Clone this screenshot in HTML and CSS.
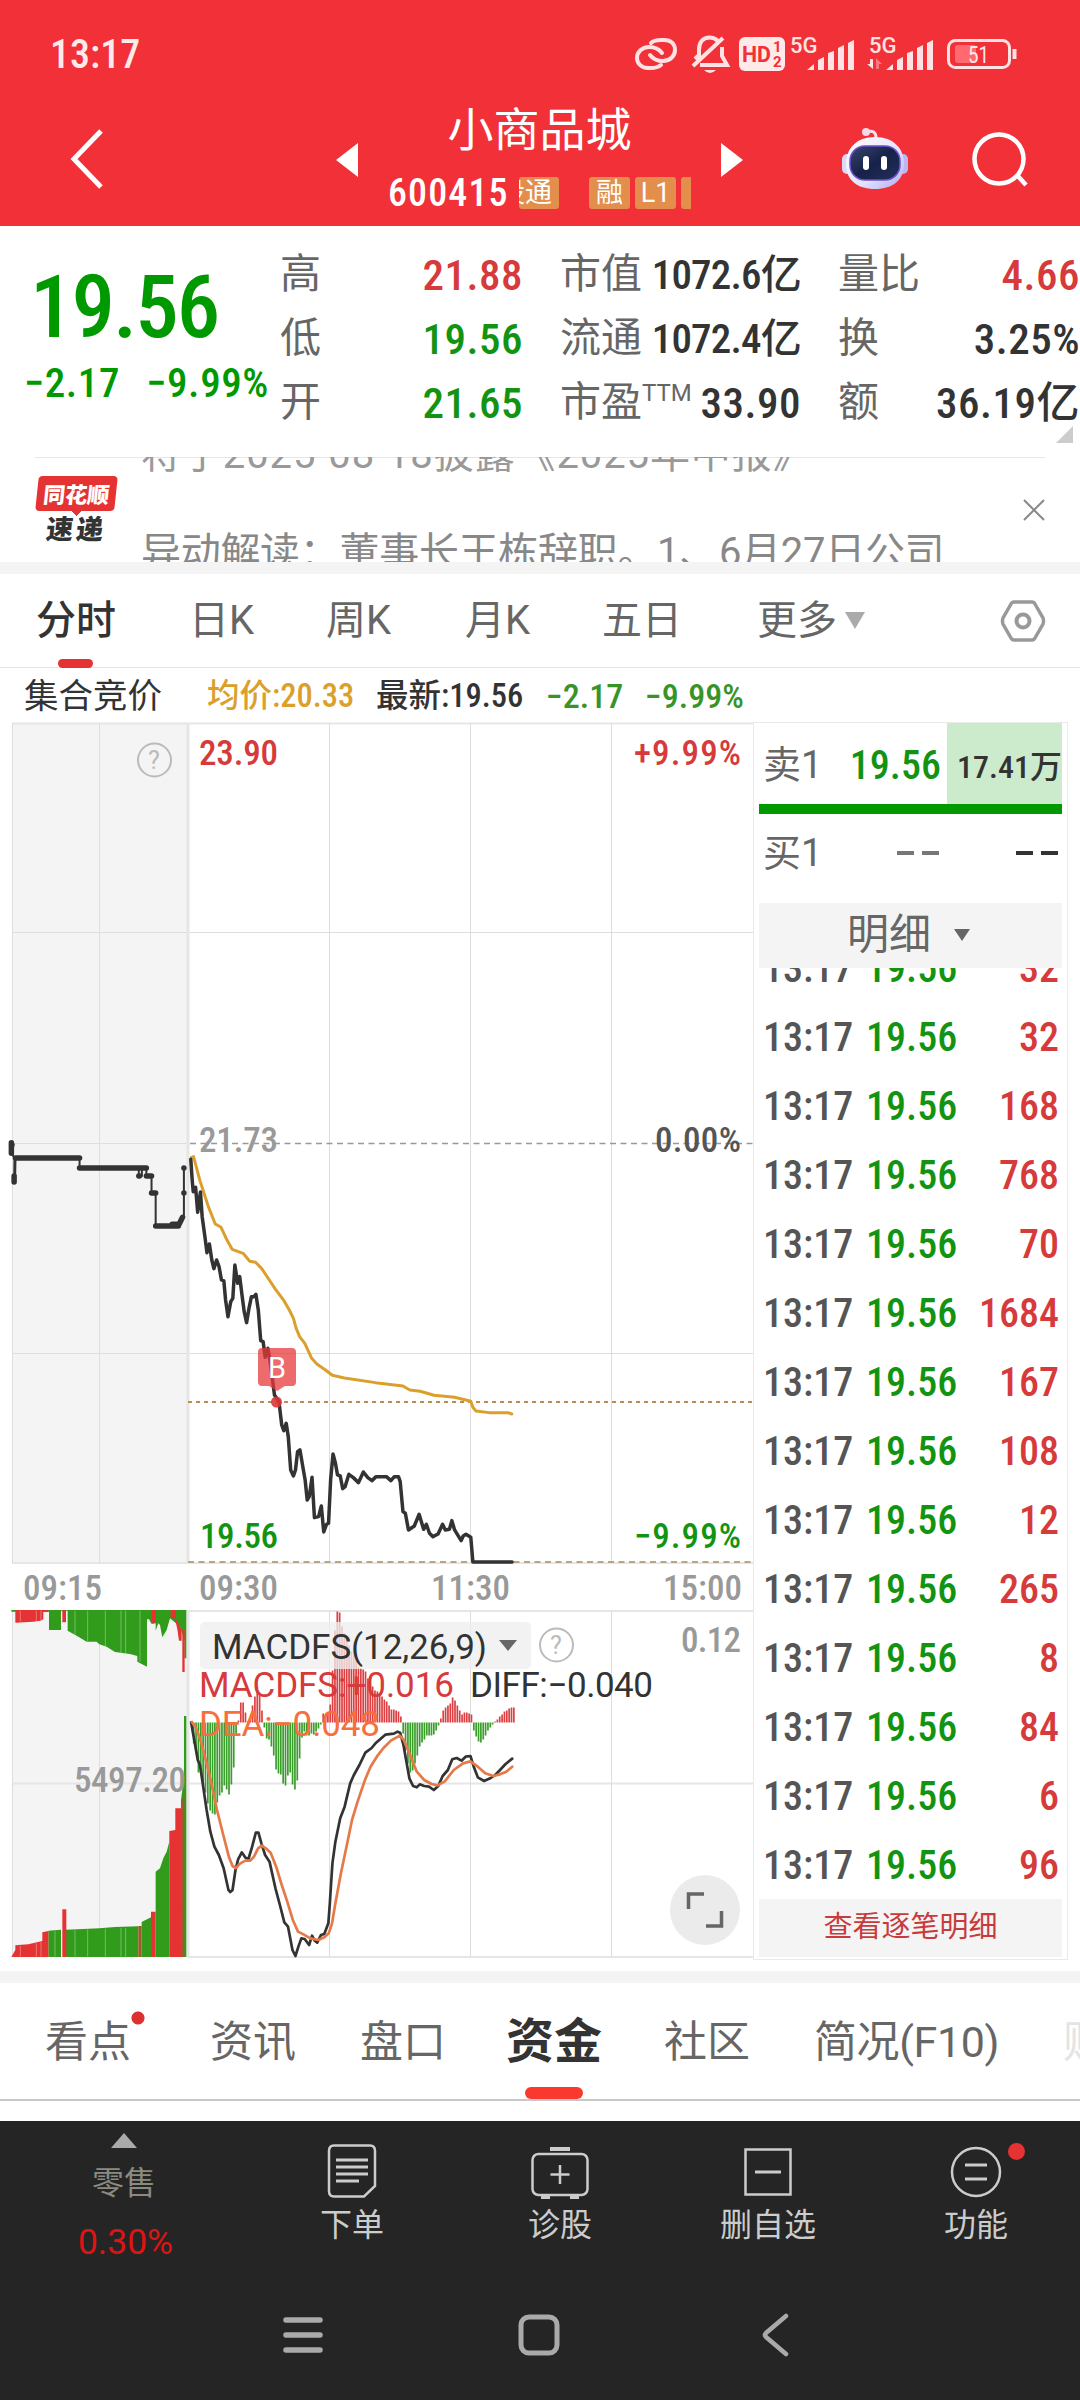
FILE: index.html
```html
<!DOCTYPE html>
<html lang="zh-CN">
<head>
    <meta charset="UTF-8">
    <meta name="viewport" content="width=device-width, initial-scale=1.0">
    <title>小商品城 600415</title>
    <link rel="stylesheet" href="styles.css">
</head>
<body>

    <header class="header">
        <div class="status-bar">
            <span class="clock num">13:17</span>
            <svg class="status-icons" width="400" height="50" viewBox="0 0 400 50" fill="none" stroke="#ffe3e4">
                <g stroke-width="4" stroke-linecap="round">
                    <path d="M21 13C24 10 27 10 31 10H34C41 10 45 14 45 20C45 26 40 31 33 31C27 31 23 29 20 25"/>
                    <path d="M31 35C28 37.500 25 38 21 38H18C11 38 7 33 7 28C7 22 12 17 19 17C25 17 29 19 32 23"/>
                </g>
                <path d="M63 36L93 8M65 29L69 25V20C69 12 73 7.500 79.500 7.500C83 7.500 86 9 88 11M92 17V26L97 35H70" stroke-width="4"/>
                <path d="M74 40H86Q80 46 74 40" fill="#ffe3e4" stroke="none"/>
                <rect x="109" y="7" width="46" height="34" rx="6" fill="#ffe9e9" stroke="none"/>
                <g fill="#f13037" stroke="none" font-weight="700">
                    <text x="112" y="32" font-size="22" textLength="29" lengthAdjust="spacingAndGlyphs">HD</text>
                    <text x="143" y="22" font-size="15">1</text>
                    <text x="143" y="37" font-size="15">2</text>
                </g>
                <g fill="#ffe3e4" stroke="none">
                    <text x="160" y="23" font-size="22" font-weight="500">5G</text>
                    <path d="M177 40L184 34V40zM188 30L194 27V40H188zM198 23L204 21V40H198zM208 18L214 15V40H208zM218 13L224 10V40H218z"/>
                    <text x="239" y="23" font-size="22" font-weight="500">5G</text>
                    <path d="M256 40L263 34V40zM267 30L273 27V40H267zM277 23L283 21V40H277zM287 18L293 15V40H287zM297 13L303 10V40H297z"/>
                    <path d="M237 34H240V29H243V39z"/>
                    <path d="M246 39V28L252 34H249V39z" opacity=".4"/>
                </g>
                <rect x="318.500" y="10.500" width="61" height="27" rx="7" stroke-width="3"/>
                <rect x="325" y="15" width="21" height="18" rx="3" fill="#ff6a70" stroke="none"/>
                <path d="M384.500 19V29" stroke-width="4"/>
                <text x="338" y="33" font-size="24" fill="#ffe9e9" stroke="none" textLength="21" lengthAdjust="spacingAndGlyphs">51</text>
            </svg>
        </div>
        <div class="nav-bar">
            <svg class="back" width="40" height="66" viewBox="0 0 40 66"><path d="M34 5L7 33L34 61" fill="none" stroke="#fff" stroke-width="5"/></svg>
            <svg class="prev" width="22" height="34" viewBox="0 0 22 34"><path d="M22 0V34L0 17z" fill="#fff"/></svg>
            <div class="stock">
                <h1>小商品城</h1>
                <div class="stock-meta">
                    <span class="code num">600415</span>
                    <div class="tags">
                        <span class="tag tag-cut">股通</span>
                        <span class="tag">融</span>
                        <span class="tag">L1</span>
                        <span class="tag tag-end"></span>
                    </div>
                </div>
            </div>
            <svg class="next" width="22" height="34" viewBox="0 0 22 34"><path d="M0 0V34L22 17z" fill="#fff"/></svg>
            <svg class="robot" width="68" height="64" viewBox="0 0 68 64">
                <defs>
                    <linearGradient id="head" x1="0" y1="0" x2="1" y2="1">
                        <stop offset="0" stop-color="#fff"/>
                        <stop offset=".6" stop-color="#e4e2fb"/>
                        <stop offset="1" stop-color="#a9acf0"/>
                    </linearGradient>
                    <linearGradient id="face" x1="0" y1="0" x2="1" y2="1">
                        <stop offset="0" stop-color="#38456c"/>
                        <stop offset=".5" stop-color="#17224a"/>
                        <stop offset="1" stop-color="#222f58"/>
                    </linearGradient>
                </defs>
                <path d="M25 6C32 4 35 6 35 12" fill="none" stroke="#f3dfee" stroke-width="3"/>
                <circle cx="25" cy="6" r="4" fill="#f6d9e4"/>
                <rect x="1" y="28" width="10" height="20" rx="5" fill="#ddd9f5"/>
                <rect x="57" y="28" width="10" height="20" rx="5" fill="#b9b8f2"/>
                <path d="M34 11C53 11 63 23 63 38C63 54 52 63 34 63C16 63 5 54 5 38C5 23 15 11 34 11z" fill="url(#head)"/>
                <rect x="9" y="20" width="50" height="34" rx="15" fill="url(#face)" stroke="#6d4fd0" stroke-width="1.500"/>
                <rect x="22" y="30" width="6" height="14" rx="3" fill="#fff"/>
                <rect x="40" y="30" width="6" height="14" rx="3" fill="#fff"/>
            </svg>
            <svg class="search" width="60" height="60" viewBox="0 0 60 60" fill="none" stroke="#fff" stroke-width="4.500"><circle cx="28" cy="28" r="24.500"/><path d="M45 43L55 54"/></svg>
        </div>
    </header>

    <section class="quote">
        <div class="price-block">
            <div class="price num">19.56</div>
            <div class="change num"><span>−2.17</span><span>−9.99%</span></div>
        </div>
        <dl class="stats">
            <div><dt>高</dt><dd class="num red">21.88</dd></div>
            <div><dt>市值</dt><dd class="num tight">1072.6亿</dd></div>
            <div><dt>量比</dt><dd class="num red">4.66</dd></div>
            <div><dt>低</dt><dd class="num green">19.56</dd></div>
            <div><dt>流通</dt><dd class="num tight">1072.4亿</dd></div>
            <div><dt>换</dt><dd class="num">3.25%</dd></div>
            <div><dt>开</dt><dd class="num green">21.65</dd></div>
            <div><dt>市盈<sup>TTM</sup></dt><dd class="num">33.90</dd></div>
            <div><dt>额</dt><dd class="num">36.19亿</dd></div>
        </dl>
        <i class="corner"></i>
    </section>

    <section class="news">
        <div class="news-logo">
            <span class="logo-top">同花顺</span>
            <span class="logo-bottom">速递</span>
        </div>
        <div class="news-lines">
            <p>将于2025-08-18披露《2025年中报》</p>
            <p>异动解读：董事长王栋辞职。1、6月27日公司</p>
        </div>
        <svg class="news-close" width="22" height="22" viewBox="0 0 22 22"><path d="M1 1L21 21M21 1L1 21" stroke="#888" stroke-width="2"/></svg>
    </section>

    <nav class="period-tabs">
        <span class="active">分时</span>
        <span>日K</span>
        <span>周K</span>
        <span>月K</span>
        <span>五日</span>
        <span class="more">更多</span>
        <svg width="20" height="17" viewBox="0 0 20 17"><path d="M0 0H20L10 17z" fill="#aaa"/></svg>
        <svg class="settings" width="46" height="44" viewBox="0 0 46 44" fill="none" stroke="#999"><path d="M14 3H32Q34 3 35 5L43 19Q44 22 43 25L35 39Q34 41 32 41H14Q12 41 11 39L3 25Q2 22 3 19L11 5Q12 3 14 3z" stroke-width="3.500"/><circle cx="23" cy="22" r="6.500" stroke-width="4"/></svg>
    </nav>

    <main class="board">
        <div class="chart-side">
            <div class="info-row">
                <span class="auction">集合竞价</span>
                <span class="avg num">均价:20.33</span>
                <span class="last num">最新:19.56</span>
                <span class="diff num">−2.17</span>
                <span class="pct num">−9.99%</span>
            </div>

            <svg class="price-chart" width="753" height="842" viewBox="0 722 753 842">
                <rect x="12" y="723" width="176" height="840" fill="#f4f4f4"/>
                <path d="M12 723.500H753M12 1563H753" stroke="#e6e6e6" stroke-width="2"/>
                <path d="M12.500 723V1563M99.500 723V1563M329.500 723V1563M470.500 723V1563M611.500 723V1563M12 932.500H753M12 1143.500H188M12 1353.500H753" stroke="#dedede"/>
                <path d="M188 723V1563" stroke="#e6e6e6" stroke-width="3"/>
                <path d="M190 1143.500H753" stroke="#999" stroke-width="1.500" stroke-dasharray="6 4.500"/>
                <path d="M188 1402H753" stroke="#bd8b50" stroke-width="2" stroke-dasharray="4 4"/>
                <path d="M188 1562H753" stroke="#b9a583" stroke-width="2" stroke-dasharray="6 4.500"/>

                <g transform="translate(0 1100) scale(.3444 .3333)" fill="none" stroke-linejoin="round" stroke-linecap="round">
                    <path class="auction-line" d="M33 128L40 133L34 160L42 175L41 246L44 228L45 174H231V204H403V228H412V204H425V228H440V279H452V378H520L530 350H534V204"/>
                    <path class="auction-dots" d="M33 128V160M41 246V228M45 174H231M231 204H425M403 228H405M425 228H440M440 279H452M452 378H518M500 373H520L530 352M534 279V279.100M534 204V204.100"/>
                    <path class="avg-line" d="M556 172L562 170L580 240L605 320L625 372L642 382L658 418L674 448L690 454L706 460L725 484L742 487L760 506L780 537L800 568L825 603L840 630L852 655L860 685L870 710L885 730L905 775L920 792L945 810L965 826L1000 834L1090 848L1170 858L1190 870L1220 874L1260 886L1320 892L1367 904L1373 922L1382 933L1420 938H1475L1486 942"/>
                    <path class="price-line" d="M554 178L558 240L561 275L568 262L574 337L582 276L587 350L595 410L601 458L608 432L615 480L621 506L629 480L636 500L643 540L650 543L655 600L662 650L670 605L676 595L682 495L690 550L696 530L702 580L709 635L716 668L723 625L730 590H737L743 583L750 630L757 722L764 725L770 772L778 745L785 790L797 885L810 905L818 975L824 992L831 970L837 1010L844 1110L852 1128L858 1110L864 1055L871 1050L880 1105L886 1140L892 1200L898 1190L906 1132L913 1253L925 1250L933 1218L940 1296L948 1273L954 1270L960 1140L967 1062L974 1090L980 1125L988 1128L995 1166L1002 1160L1013 1123L1026 1133L1041 1148L1055 1116L1068 1133L1080 1142L1092 1130H1122L1135 1142L1145 1130H1157L1162 1145L1170 1235L1177 1240L1186 1290L1203 1278L1217 1243L1230 1288L1238 1273L1247 1300L1257 1310L1272 1302L1285 1273L1293 1290L1305 1288L1312 1262L1320 1290L1339 1322L1345 1308L1353 1303L1367 1312L1373 1386H1487"/>
                </g>
                <path d="M258 1352Q258 1348 262 1348H292Q296 1348 296 1352V1382Q296 1386 292 1386H285L277 1391L269 1386H262Q258 1386 258 1382z" fill="#e83a3c" fill-opacity=".75"/>
                <circle cx="276.500" cy="1402" r="5.500" fill="#dd3535" fill-opacity=".9"/>
                <text x="268" y="1378" font-size="29" fill="#fff">B</text>

                <circle cx="154.500" cy="760" r="16.500" fill="none" stroke="#bbb" stroke-width="2"/>
                <text x="148" y="769" font-size="25" fill="#bbb">?</text>
                <g class="chart-text">
                    <text x="199" y="765" fill="#d63a3a" textLength="79">23.90</text>
                    <text x="634" y="765" fill="#d63a3a" textLength="107">+9.99%</text>
                    <text x="199" y="1152" fill="#999" textLength="79">21.73</text>
                    <text x="655" y="1152" fill="#555" textLength="86">0.00%</text>
                    <text x="200" y="1548" fill="#129412" textLength="78">19.56</text>
                    <text x="634" y="1548" fill="#129412" textLength="107">−9.99%</text>
                </g>
            </svg>

            <div class="time-axis num">
                <span>09:15</span>
                <span>09:30</span>
                <span>11:30</span>
                <span>15:00</span>
            </div>

            <svg class="macd-chart" width="753" height="348" viewBox="0 1610 753 348">
                <rect x="12" y="1611" width="176" height="346" fill="#f4f4f4"/>
                <path d="M12 1611H753M188 1957H753M12 1783.500H753" stroke="#e6e6e6" stroke-width="2"/>
                <path d="M12.500 1611V1957M99.500 1611V1957M329.500 1611V1957M470.500 1611V1957M611.500 1611V1957" stroke="#dedede"/>
                <path d="M188 1611V1957" stroke="#e6e6e6" stroke-width="3"/>
                <!-- call auction volume -->
                <g transform="translate(0 1590) scale(.3333)">
                    <path fill="#319b1b" d="M34 60H559V205H553V150L540 110L510 85L500 120L487 142L480 105L475 100L467 122V100L455 102L447 88H441V230L425 222L412 215V198L390 192L345 186L320 170L298 163L290 155H260L235 140L203 122V62H183V120H147V65H34z"/>
                    <path fill="#e53232" d="M46 60H145V66H130V88L122 92L100 95L46 98zM187 60H198V97H187zM455 60H467V98H455zM512 60H528V86L545 120V152H537L532 118L525 86L512 82zM547 120H554V246H547z"/>
                    <path fill="#319b1b" d="M145 1101V1022L183 1019V1101zM198 1101V1019L298 1015L345 1011L415 1009V1101zM425 1101V996L453 982V1101zM467 1101V845L480 835L490 805L500 785L508 755V1101zM543 1101V630L552 560V378H559V1101z"/>
                    <path fill="#e53232" d="M34 1101L46 1080V1066L85 1063L127 1053V1027L145 1023V1101zM187 1101V958H199V1101zM453 1101V965H467V1101zM508 1101V723L526 720V655H543V1101z"/>
                    <path fill="#a1582a" d="M415 1101V1008H425V1101zM545 1101V640L553 605V1101z"/>
                    <path stroke="#fff" stroke-opacity=".5" stroke-width="2" d="M61 62V94M109 62V94M123 62V92M225 62V134M263 62V154M316 62V170M363 62V188M377 62V190M420 62V216M61 1068V1100M109 1060V1100M123 1056V1100M165 1024V1100M225 1020V1100M263 1018V1100M316 1016V1100M363 1014V1100M377 1014V1100"/>
                </g>
                <text class="chart-text" x="74" y="1792" fill="#999" textLength="112">5497.20</text>

                <g id="macdBars"></g>
                <g transform="translate(180 1590) scale(.36996 .33333)" fill="none" stroke-linejoin="round" stroke-linecap="round">
                    <path class="diff-line" d="M30 397L40 460L48 510L54 525L72 660L82 725L93 770L105 795L118 835L131 900L136 906L142 900L150 840L157 808L167 787L177 803L185 807L195 770L205 728H212L220 760L230 795L242 815L258 895L270 945L282 997L292 1010L304 1080L312 1098L320 1070L328 1045L337 1047L349 1065L357 1037L364 1052L371 1058L381 1035L390 1032L401 1000L405 940L409 870L412 820L420 755L433 685L445 650L460 580L470 555L485 525L501 488L518 474L530 458L555 434L578 431L588 425L595 428L604 465L612 515L620 565L630 588L640 592L648 583L660 588L673 590L686 600L698 588L710 558L724 540L736 508L748 504L761 512L772 500L785 498L794 530L805 562L822 573L840 564L852 555L865 540L880 522L898 506"/>
                    <path class="dea-line" d="M32 396L44 415L58 460L72 520L85 580L100 660L117 735L132 800L142 828L151 834L163 820L177 812H190L200 800L211 775L221 767L232 775L245 788L260 830L275 885L290 935L305 990L319 1025L335 1034L352 1045L374 1050L390 1042L402 1030L411 1000L420 940L435 850L450 770L465 690L480 635L500 570L515 530L532 500L550 474L570 452L594 437L605 450L622 495L640 545L660 570L680 582L696 586L715 575L740 540L765 520L785 514L805 530L825 550L847 558L865 553L882 545L898 530"/>
                </g>

                <rect x="200" y="1622" width="331" height="47" rx="5" fill="#eee" fill-opacity=".78"/>
                <path d="M499 1640H517L508 1651z" fill="#666"/>
                <circle cx="556.500" cy="1645" r="16.500" fill="none" stroke="#bbb" stroke-width="2"/>
                <text x="550" y="1654" font-size="25" fill="#bbb">?</text>
                <g class="macd-text">
                    <text x="212" y="1659" fill="#333" textLength="275">MACDFS(12,26,9)</text>
                    <text x="199" y="1697" fill="#d63a3a" textLength="255">MACDFS:+0.016</text>
                    <text x="470" y="1697" fill="#333" textLength="183">DIFF:−0.040</text>
                    <text x="199" y="1736" fill="#f5703c" textLength="181">DEA:−0.048</text>
                </g>
                <text class="chart-text" x="681" y="1652" fill="#999" textLength="60">0.12</text>
                <circle cx="705" cy="1910" r="35" fill="#ebebeb"/>
                <path d="M688.500 1909V1894H704M706 1926H721.500V1911" fill="none" stroke="#666" stroke-width="3.500"/>
            </svg>
        </div>

        <aside class="order-book">
            <div class="level">
                <span class="side">卖1</span>
                <span class="level-price num green">19.56</span>
                <span class="level-vol num">17.41万</span>
            </div>
            <div class="ratio-bar"></div>
            <div class="level buy">
                <span class="side">买1</span>
                <span class="level-price dash"><i></i><i></i></span>
                <span class="dash dark"><i></i><i></i></span>
            </div>
            <div class="ticks-title">明细 <svg width="16" height="12" viewBox="0 0 16 12"><path d="M0 0H16L8 12z" fill="#666"/></svg></div>
            <ul class="ticks num">
                <li><span>13:17</span><b>19.56</b><em>32</em></li>
                <li><span>13:17</span><b>19.56</b><em>32</em></li>
                <li><span>13:17</span><b>19.56</b><em>168</em></li>
                <li><span>13:17</span><b>19.56</b><em>768</em></li>
                <li><span>13:17</span><b>19.56</b><em>70</em></li>
                <li><span>13:17</span><b>19.56</b><em>1684</em></li>
                <li><span>13:17</span><b>19.56</b><em>167</em></li>
                <li><span>13:17</span><b>19.56</b><em>108</em></li>
                <li><span>13:17</span><b>19.56</b><em>12</em></li>
                <li><span>13:17</span><b>19.56</b><em>265</em></li>
                <li><span>13:17</span><b>19.56</b><em>8</em></li>
                <li><span>13:17</span><b>19.56</b><em>84</em></li>
                <li><span>13:17</span><b>19.56</b><em>6</em></li>
                <li><span>13:17</span><b>19.56</b><em>96</em></li>
            </ul>
            <div class="ticks-more">查看逐笔明细</div>
        </aside>
    </main>

    <nav class="section-tabs">
        <span class="has-dot">看点</span>
        <span>资讯</span>
        <span class="before-active">盘口</span>
        <span class="active">资金</span>
        <span>社区</span>
        <span class="profile">简况(F10)</span>
        <span class="faded">财务</span>
    </nav>

    <footer class="footer">
        <div class="actions">
            <div class="sector">
                <i class="up"></i>
                <span>零售</span>
                <strong>0.30%</strong>
            </div>
            <div class="action">
                <svg width="60" height="56" viewBox="0 0 60 56"><path d="M12 2.500H48Q53 2.500 53 8V43L42 53.500H12Q7 53.500 7 48V8Q7 2.500 12 2.500z"/><path d="M14 17H46M14 24H46M14 31H46M14 38H37" stroke-width="3"/></svg>
                <span>下单</span>
            </div>
            <div class="action">
                <svg width="60" height="56" viewBox="0 0 60 56"><rect x="2.500" y="11" width="55" height="41" rx="6"/><path d="M20 6H40M11 54H20M40 54H49" stroke-width="4"/><path d="M30 22V41M20.500 31.500H39.500"/></svg>
                <span>诊股</span>
            </div>
            <div class="action">
                <svg width="60" height="56" viewBox="0 0 60 56"><rect x="7.500" y="6.500" width="45" height="45"/><path d="M17 29H43" stroke-width="3"/></svg>
                <span>删自选</span>
            </div>
            <div class="action">
                <svg width="60" height="56" viewBox="0 0 60 56"><circle cx="30" cy="29" r="24"/><path d="M19 22H41M19 36H41" stroke-width="3"/></svg>
                <i class="dot"></i>
                <span>功能</span>
            </div>
        </div>
        <div class="system-nav">
            <svg width="44" height="44" viewBox="0 0 44 44"><path d="M5 7H39M5 22H39M5 37H39" stroke-width="5.500"/></svg>
            <svg width="44" height="44" viewBox="0 0 44 44"><rect x="4" y="4" width="36" height="36" rx="8" stroke-width="5"/></svg>
            <svg width="44" height="44" viewBox="0 0 44 44"><path d="M33 3L13 20Q11 22 13 24L33 41" stroke-width="4.500"/></svg>
        </div>
    </footer>

    <script>
        // one bar per minute, in px above (+) or below (-) the zero line
        const macd = [
            0, -21, -31, -50, -49, -60, -70, -81, -88, -91, -92, -80, -73, -70, -63, -67, -72, -62, -45, -11,
            2, 20, 20, 10, 1, 3, 17, 26, 36, 27, 12, -5, -16, -17, -24, -33, -47, -51, -52, -61,
            -63, -53, -50, -62, -67, -58, -36, -15, -9, -13, -13, -11, -12, -9, -6, -2, 9, 5, 9, 18,
            52, 92, 111, 110, 96, 89, 84, 77, 71, 67, 62, 56, 54, 53, 51, 44, 38, 36, 32, 31,
            29, 26, 23, 21, 17, 13, 13, 12, 11, 6, -11, -28, -41, -50, -48, -41, -33, -24, -20, -17,
            -13, -13, -13, -12, -8, -3, 4, 12, 15, 17, 19, 25, 22, 17, 12, 8, 10, 10, 9, 8,
            -8, -14, -19, -20, -17, -13, -8, -5, -2, 1, 3, 6, 8, 11, 12, 14, 15, 15
        ];
        const zeroY = 1722.5;
        const step = 2.354;
        let bars = '';
        macd.forEach((v, i) => {
            const x = (190.5 + i * step).toFixed(2);
            const y = v > 0 ? zeroY - v : zeroY;
            const color = v > 0 ? '#dd4042' : '#3a9e2a';
            bars += `<rect x="${x}" y="${y}" width="1.7" height="${Math.abs(v)}" fill="${color}"/>`;
        });
        document.getElementById('macdBars').innerHTML = bars;
    </script>

</body>
</html>
```

FILE: styles.css
```css
* {
    box-sizing: border-box;
}
body {
    margin: 0;
    width: 1080px;
    height: 2400px;
    overflow: hidden;
    background: #fff;
    color: #333;
    font-family: Roboto, "Noto Sans CJK SC", sans-serif;
}
h1, p, dl, dd, ul {
    margin: 0;
    padding: 0;
}
i, em {
    font-style: normal;
}
svg {
    display: block;
    flex: none;
}
.num {
    font-weight: 500;
    font-stretch: 75%;
}
.red {
    color: #d63a3a;
}
.green {
    color: #129412;
}

/* header */
.header {
    height: 226px;
    background: #f13037;
    color: #fff;
}
.status-bar {
    height: 100px;
    padding: 30px 50px 0 50px;
    display: flex;
    justify-content: space-between;
}
.clock {
    font-size: 40px;
    line-height: 50px;
    color: #ffeaea;
}
.nav-bar {
    display: flex;
    height: 126px;
}
.back {
    margin: 26px 0 0 67px;
}
.prev {
    margin: 43px 0 0 229px;
}
.stock {
    width: 363px;
    padding-left: 30px;
    display: flex;
    flex-direction: column;
}
.stock h1 {
    font-size: 46px;
    font-weight: 400;
    line-height: 61px;
    text-align: center;
    padding-right: 30px;
}
.stock-meta {
    display: flex;
    align-items: center;
    height: 63px;
}
.code {
    width: 131px;
    font-size: 38px;
    letter-spacing: 1.1px;
}
.tags {
    display: flex;
    width: 172px;
    gap: 5px;
    overflow: hidden;
}
.tag {
    flex: none;
    height: 32px;
    width: 41px;
    border-radius: 3px;
    background: #e38e4b;
    font-size: 27px;
    line-height: 32px;
    text-align: center;
}
.tag-cut {
    width: 40px;
    margin-right: 25px;
    direction: rtl;
    overflow: hidden;
    white-space: nowrap;
    padding-right: 7px;
    text-align: right;
}
.next {
    margin: 43px 0 0;
}
.robot {
    margin: 26px 0 0 98px;
}
.search {
    margin: 31px 0 0 62px;
}

/* quote */
.quote {
    position: relative;
    display: flex;
    height: 231px;
}
.price-block {
    width: 280px;
    color: #009900;
}
.price {
    padding: 30px 0 0 30px;
    font-size: 87px;
    line-height: 102px;
    letter-spacing: -2px;
}
.change {
    display: flex;
    justify-content: space-between;
    padding: 0 11px 0 24px;
    font-size: 41px;
    line-height: 50px;
    letter-spacing: .6px;
}
.stats {
    display: grid;
    grid-template-columns: 243px 241px 242px;
    grid-auto-rows: 64px;
    column-gap: 37px;
    padding-top: 16px;
}
.stats div {
    display: flex;
    justify-content: space-between;
    white-space: nowrap;
    line-height: 64px;
}
.stats dt {
    font-size: 41px;
    color: #666;
}
.stats dd {
    font-size: 43px;
    line-height: 66px;
    letter-spacing: .5px;
}
.stats .tight {
    font-size: 41px;
    letter-spacing: -.8px;
}
.stats sup {
    font-size: 24px;
    line-height: 0;
}
.corner {
    position: absolute;
    right: 7px;
    bottom: 14px;
    border-left: 17px solid transparent;
    border-bottom: 17px solid #ccc;
}

/* news */
.news {
    display: flex;
    height: 117px;
    padding: 0 35px;
    border-bottom: 12px solid #f4f4f4;
    background: linear-gradient(#e6e6e6, #e6e6e6) 35px 0 / 1010px 1px no-repeat;
}
.news-logo {
    width: 106px;
    padding-top: 19px;
    font-weight: 900;
    font-family: "Noto Sans CJK SC", sans-serif;
}
.logo-top, .logo-bottom {
    display: block;
    width: 79px;
    height: 35px;
    margin-left: 2px;
    transform: skewX(-6deg);
    border-radius: 4px;
    background: #e53232;
    color: #fff;
    font-size: 22px;
    line-height: 34px;
    text-align: center;
}
.logo-bottom {
    height: 32px;
    background: conic-gradient(from -45deg at 50% 100%, #e53232 90deg, transparent 0) 33px 0 / 10px 5px no-repeat;
    color: #333;
    font-size: 27px;
    letter-spacing: 3px;
}
.news-lines {
    flex: 1;
    height: 105px;
    overflow: hidden;
    font-size: 40px;
    line-height: 98px;
    letter-spacing: -.3px;
    color: #888;
    white-space: nowrap;
}
.news-lines p:first-child {
    margin-top: -51px;
    letter-spacing: .9px;
    color: #999;
}
.news-close {
    margin-top: 42px;
}

/* period tabs */
.period-tabs {
    display: flex;
    align-items: center;
    height: 94px;
    padding: 0 34px 0 36px;
    border-bottom: 1px solid #e4e4e4;
    font-size: 40px;
    color: #666;
}
.period-tabs span {
    width: 137px;
    white-space: nowrap;
    line-height: 94px;
}
.period-tabs span:first-child {
    width: 153px;
}
.period-tabs span:nth-child(3) {
    width: 139px;
}
.period-tabs span:nth-child(5) {
    width: 155px;
}
.period-tabs .more {
    width: 88px;
}
.period-tabs .active {
    position: relative;
    color: #333;
    font-weight: 500;
}
.period-tabs .active::after {
    content: "";
    position: absolute;
    left: 22px;
    bottom: 0;
    width: 35px;
    height: 9px;
    border-radius: 5px;
    background: #e53232;
}
.period-tabs .settings {
    margin-left: auto;
}

/* chart */
.board {
    display: flex;
    height: 1315px;
    border-bottom: 12px solid #f4f4f4;
}
.chart-side {
    width: 753px;
}
.info-row {
    display: flex;
    height: 54px;
    padding-left: 24px;
    line-height: 57px;
    font-size: 34px;
    white-space: nowrap;
}
.auction {
    width: 183px;
    font-size: 34.500px;
}
.avg {
    width: 169px;
    font-size: 32.500px;
    color: #dba02c;
}
.last {
    width: 170px;
    font-size: 32.500px;
}
.diff, .pct {
    color: #399427;
}
.diff {
    width: 99px;
}
.chart-text {
    font-size: 35px;
    font-weight: 500;
    font-stretch: 75%;
}
.macd-text {
    font-family: Roboto, sans-serif;
    font-size: 35px;
}
.auction-line, .price-line, .avg-line, .auction-dots, .diff-line, .dea-line {
    vector-effect: non-scaling-stroke;
}
.auction-line {
    stroke: #333;
    stroke-width: 2;
}
.auction-dots {
    stroke: #333;
    stroke-width: 5.500;
}
.price-line {
    stroke: #333;
    stroke-width: 3.500;
}
.avg-line {
    stroke: #dba02c;
    stroke-width: 3;
}
.diff-line {
    stroke: #333;
    stroke-width: 2.700;
}
.dea-line {
    stroke: #e57a48;
    stroke-width: 2.700;
}
.time-axis {
    display: flex;
    justify-content: space-between;
    height: 46px;
    padding: 0 11px 0 23px;
    font-size: 35px;
    line-height: 50px;
    color: #999;
}
.time-axis span:nth-child(2) {
    margin-left: -56px;
}

/* order book */
.order-book {
    width: 315px;
    height: 1238px;
    margin-top: 54px;
    padding: 0 5px;
    border: 1px solid #eaeaea;
    display: flex;
    flex-direction: column;
}
.level {
    display: flex;
    height: 81px;
    line-height: 85px;
    padding-left: 4px;
    align-items: stretch;
}
.side {
    width: 60px;
    font-size: 38px;
    color: #666;
    white-space: nowrap;
}
.level-price {
    width: 118px;
    text-align: right;
    font-size: 40px;
}
.level-vol {
    width: 115px;
    margin-left: auto;
    background: #cceacc;
    text-align: right;
    font-size: 32px;
    line-height: 89px;
}
.ratio-bar {
    height: 10px;
    background: #009900;
}
.buy {
    height: 89px;
    line-height: 78px;
}
.dash {
    display: flex;
    justify-content: flex-end;
    gap: 8px;
    padding-top: 37px;
}
.dash i {
    width: 17px;
    height: 4px;
    background: #777;
}
.dash.level-price {
    width: 116px;
}
.dash.dark {
    margin-left: auto;
    padding-right: 4px;
}
.dash.dark i {
    background: #333;
}
.ticks-title {
    display: flex;
    align-items: center;
    gap: 23px;
    height: 65px;
    padding-left: 88px;
    background: #f4f4f4;
    font-size: 42px;
    line-height: 62px;
    padding-bottom: 1px;
    color: #666;
}
.ticks {
    flex: 1;
    display: flex;
    flex-direction: column;
    justify-content: flex-end;
    overflow: hidden;
    list-style: none;
    font-size: 40px;
}
.ticks li {
    flex: none;
    display: flex;
    height: 69px;
    padding: 0 3px 0 4px;
    line-height: 71px;
}
.ticks span {
    width: 103px;
    color: #555;
}
.ticks b {
    font-weight: 500;
    color: #129412;
}
.ticks em {
    margin-left: auto;
    color: #d63a3a;
}
.ticks-more {
    height: 58px;
    margin-bottom: 2px;
    background: #f4f4f4;
    color: #c93b3b;
    font-size: 29px;
    line-height: 57px;
    text-align: center;
}

/* section tabs */
.section-tabs {
    display: flex;
    height: 118px;
    padding-left: 45px;
    border-bottom: 2px solid #c8c8c8;
    font-size: 43px;
    line-height: 118px;
    color: #666;
    white-space: nowrap;
    overflow: hidden;
}
.section-tabs span {
    flex: none;
    margin-right: 64px;
}
.section-tabs .has-dot {
    background: radial-gradient(circle at 93px 35px, #dd3030 6px, transparent 7px) no-repeat;
    padding-right: 15px;
    margin-right: 64px;
}
.section-tabs .before-active {
    margin-right: 60px;
}
.section-tabs .active {
    position: relative;
    margin-right: 62px;
    font-size: 48px;
    font-weight: 700;
    color: #333;
}
.section-tabs .active::after {
    content: "";
    position: absolute;
    left: 19px;
    bottom: 0;
    width: 58px;
    height: 12px;
    border-radius: 6px;
    background: #f9382f;
}
.section-tabs .profile {
    letter-spacing: -.4px;
}
.section-tabs .faded {
    color: #e4e4e4;
}

/* footer */
.footer {
    height: 279px;
    margin-top: 20px;
    background: #252525;
}
.actions {
    display: flex;
    height: 163px;
    color: #ccc;
    font-size: 32px;
}
.sector {
    width: 248px;
    display: flex;
    flex-direction: column;
    align-items: center;
    color: #8a8a80;
}
.sector .up {
    margin-top: 12px;
    border: 13px solid transparent;
    border-top: 0;
    border-bottom: 15px solid #aaa;
}
.sector span {
    margin-top: 9px;
    line-height: 52px;
}
.sector strong {
    margin-top: 3px;
    padding-left: 3px;
    color: #dd1414;
    font-weight: 400;
    font-size: 35.500px;
    line-height: 60px;
}
.action {
    position: relative;
    width: 208px;
    padding-top: 22px;
    display: flex;
    flex-direction: column;
    align-items: center;
}
.action span {
    line-height: 52px;
}
.action svg, .system-nav svg {
    fill: none;
    stroke: #ccc;
    stroke-width: 2.500;
}
.dot {
    position: absolute;
    top: 22px;
    left: 136px;
    width: 17px;
    height: 17px;
    border-radius: 50%;
    background: #e53232;
}
.system-nav {
    display: flex;
    justify-content: space-between;
    padding: 29px 283px 0 281px;
}
.system-nav svg {
    stroke: #aaa;
    stroke-linecap: round;
}
```
